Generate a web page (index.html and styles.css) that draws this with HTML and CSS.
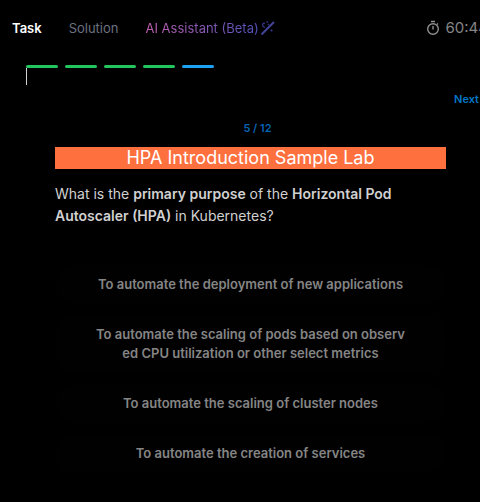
FILE: index.html
```html
<!DOCTYPE html>
<html lang="en">
<head>
<meta charset="utf-8">
<title>HPA Introduction Sample Lab</title>
<link rel="stylesheet" href="styles.css">
</head>
<body>
<header class="topbar">
  <nav class="tabs">
    <a class="tab tab-active" href="#task">Task</a>
    <a class="tab" href="#solution">Solution</a>
    <a class="tab tab-ai" href="#assistant"><span class="ai-label">AI Assistant (Beta)</span>
      <svg class="wand" viewBox="0 0 16 16" aria-hidden="true">
        <path class="wand-spark" d="M5 3.500c-2-1-3 1-2 3M3 6.500l2 1M6.500 2.500l1.500-1M8 4l1 1M11.500 9.500v2M10.500 10.500h2"/>
        <path class="wand-stick" d="M1.500 14.500 14 2"/>
      </svg>
    </a>
  </nav>
  <div class="timer">
    <svg class="stopwatch" viewBox="0 0 14 16" aria-hidden="true">
      <circle cx="7" cy="9" r="5.300"/>
      <path d="M5 1.500h4M7 6v3.500M11 4.500l1-1"/>
    </svg>
    <span>60:44</span>
  </div>
</header>
<main>
  <div class="progress">
    <span class="step"></span><span class="step"></span><span class="step"></span><span class="step"></span><span class="step step-current"></span>
  </div>
  <div class="marker"></div>
  <div class="next-row"><button class="next" type="button">Next</button></div>
  <section class="question">
    <p class="count">5 / 12</p>
    <h1 class="title">HPA Introduction Sample Lab</h1>
    <p class="prompt">What is the <strong>primary purpose</strong> of the <strong>Horizontal Pod Autoscaler (HPA)</strong> in Kubernetes?</p>
    <div class="answers">
      <button class="answer" type="button">To automate the deployment of new applications</button>
      <button class="answer" type="button">To automate the scaling of pods based on observed CPU utilization or other select metrics</button>
      <button class="answer" type="button">To automate the scaling of cluster nodes</button>
      <button class="answer" type="button">To automate the creation of services</button>
    </div>
  </section>
</main>
</body>
</html>
```
FILE: styles.css
```css
* { box-sizing: border-box; }
body {
  margin: 0;
  background: #000;
  color: #d1d1d1;
  font-family: Inter, "Liberation Sans", sans-serif;
  overflow-x: hidden;
}
button { border: 0; font-family: inherit; cursor: pointer; }
.topbar {
  display: flex;
  align-items: center;
  justify-content: space-between;
  height: 56px;
  padding-left: 12px;
  white-space: nowrap;
}
.tabs { display: flex; gap: 27px; font-size: 13px; line-height: 20px; }
.tab { display: flex; align-items: center; color: #6b7280; text-decoration: none; }
.tab-active { color: #fff; font-weight: 600; }
.tab-ai { gap: 1px; }
.ai-label {
  background: linear-gradient(90deg, #c060b0, #5050b8);
  background-clip: text;
  color: transparent;
}
.wand { width: 16px; height: 16px; fill: none; stroke: #44449c; }
.wand-stick { stroke-width: 2; }
.wand-spark { stroke: #343484; stroke-width: 1.3; }
.timer {
  display: flex;
  align-items: center;
  gap: 6px;
  color: #858585;
  font-size: 15px;
  line-height: 20px;
  margin-right: -8px;
}
.stopwatch { width: 14px; height: 16px; fill: none; stroke: #909090; stroke-width: 1.4; }
.progress { display: flex; gap: 7px; padding: 9px 0 0 26px; }
.step { width: 32px; height: 3px; border-radius: 2px; background: #22c55e; }
.step-current { background: #1da1f2; }
.marker { width: 1px; height: 17px; margin-left: 26px; background: #d1d1d1; }
.next-row { display: flex; justify-content: flex-end; padding: 6px 1px 0 0; }
.next { padding: 0; background: none; color: #0077c8; font-size: 11px; font-weight: 600; line-height: 16px; }
.question { padding: 13px 34px 0 55px; }
.count { margin: 0; padding-left: 14px; color: #0464b4; font-size: 11px; font-weight: 600; line-height: 16px; text-align: center; }
.title {
  margin: 11px 0 14px;
  background: #ff703f;
  color: #fff;
  font-size: 18px;
  font-weight: 400;
  line-height: 22px;
  text-align: center;
}
.prompt { margin: 0; font-size: 14px; line-height: 22px; }
.prompt strong { font-weight: 600; }
.answers { display: grid; gap: 11px; margin-top: 38px; }
.answer {
  padding: 10px 40px;
  border-radius: 20px;
  background: #010101;
  color: #858585;
  font-size: 13px;
  font-weight: 600;
  line-height: 19px;
  word-break: break-all;
}
```
